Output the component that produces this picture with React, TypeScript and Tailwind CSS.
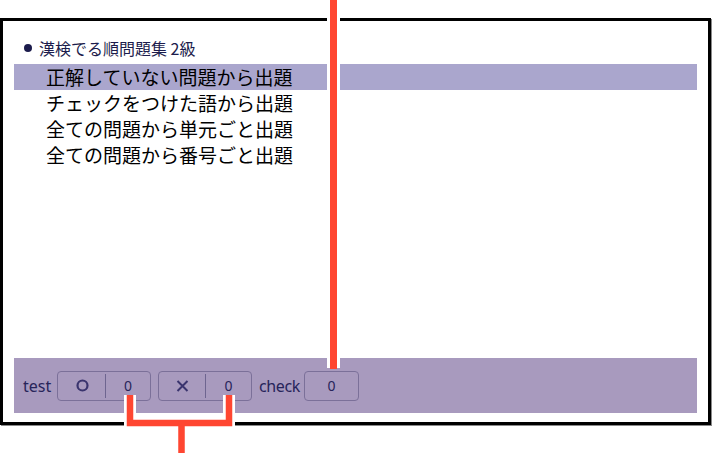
import React from "react";

const items = [
  "正解していない問題から出題",
  "チェックをつけた語から出題",
  "全ての問題から単元ごと出題",
  "全ての問題から番号ごと出題",
];

function Circle() {
  return (
    <svg width="13" height="13" viewBox="0 0 13 13">
      <circle cx="6.5" cy="6.5" r="5" fill="none" stroke="#3a346e" strokeWidth="2.2" />
    </svg>
  );
}

function Cross() {
  return (
    <svg width="13" height="12" viewBox="0 0 13 12">
      <path d="M1.5 1 L11.5 11 M11.5 1 L1.5 11" stroke="#3a346e" strokeWidth="2" fill="none" />
    </svg>
  );
}

export default function App() {
  return (
    <div className="relative w-[712px] h-[453px] bg-white overflow-hidden" style={{ fontFamily: '"Noto Sans", "Noto Sans CJK JP", sans-serif' }}>
      <div className="mt-[18px] w-[711px] h-[407px] border-[3px] border-black shadow-[1px_1px_0_#8a8a8a] flex flex-col px-[11px] pb-[9px]">
        <div className="pt-[17px] h-[43px] flex items-start">
          <div className="flex items-center h-[20px] pl-[10px] gap-[7px]">
            <span className="w-[8px] h-[8px] rounded-full bg-[#1c1c4c]" />
            <span className="text-[16px] leading-[20px] text-[#1c1c4c]" style={{ fontFamily: '"Noto Sans CJK JP", sans-serif' }}>
              漢検でる順問題集 2級
            </span>
          </div>
        </div>
        <div className="flex flex-col">
          {items.map((t, i) => (
            <div
              key={t}
              className={`h-[26px] flex items-center pl-[32px] text-[19px] leading-[26px] text-black ${i === 0 ? "bg-[#aaa6cd]" : ""}`}
              style={{ fontFamily: '"Noto Sans CJK JP", sans-serif' }}
            >
              {t}
            </div>
          ))}
        </div>
        <div className="flex-1" />
        <div className="h-[55px] bg-[#a89abe] flex items-center pl-[9px] text-[#27245a]">
          <span className="text-[16px] leading-none w-[29px]">test</span>
          <div className="ml-[5px] w-[94px] h-[30px] border border-[#7b7099] rounded-[4px] flex items-center">
            <div className="w-[47px] flex justify-center pl-[1px]"><Circle /></div>
            <div className="w-px h-[24px] bg-[#6e6590]" />
            <div className="flex-1 flex justify-center text-[14px] leading-none">0</div>
          </div>
          <div className="ml-[7px] w-[94px] h-[30px] border border-[#7b7099] rounded-[4px] flex items-center">
            <div className="w-[46px] flex justify-center pl-[1px]"><Cross /></div>
            <div className="w-px h-[24px] bg-[#6e6590]" />
            <div className="flex-1 flex justify-center text-[14px] leading-none">0</div>
          </div>
          <span className="ml-[7px] text-[16px] leading-none w-[40px] tracking-[-0.4px]">check</span>
          <div className="ml-[5px] w-[55px] h-[30px] border border-[#7b7099] rounded-[4px] flex items-center justify-center text-[14px] leading-none">
            0
          </div>
        </div>
      </div>
      <svg className="absolute left-0 top-0 pointer-events-none" width="712" height="453" viewBox="0 0 712 453">
        <rect x="327" y="0" width="13" height="368" fill="#ffffff" />
        <rect x="330" y="0" width="7" height="369" fill="#ff4631" />
        <path d="M130 395 L130 423 L229 423 L229 395 M181.5 423 L181.5 453" fill="none" stroke="#ffffff" strokeWidth="12" />
        <path d="M130 395 L130 423 L229 423 L229 395 M181.5 423 L181.5 453" fill="none" stroke="#ff4631" strokeWidth="6.5" />
      </svg>
    </div>
  );
}
